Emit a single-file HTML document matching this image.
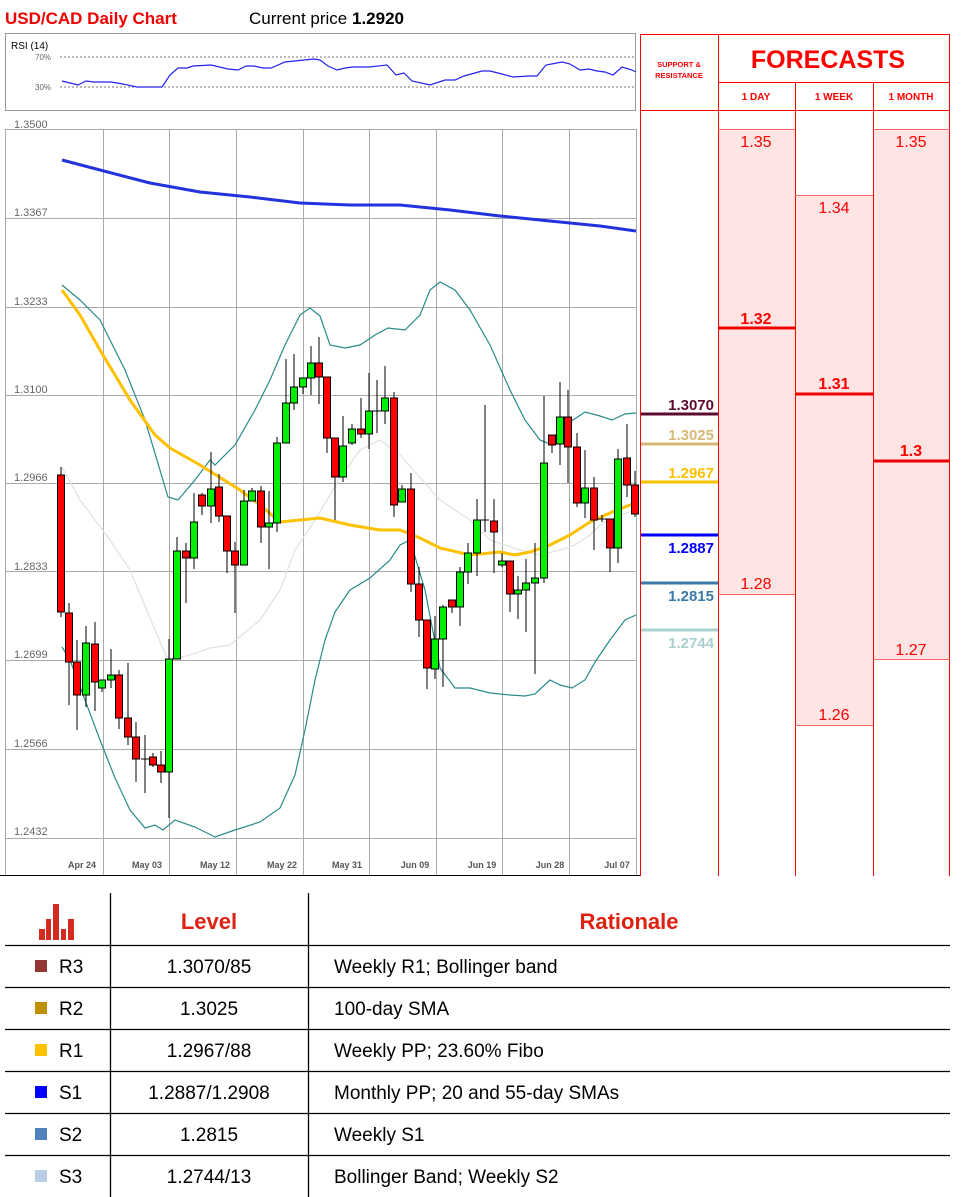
<!DOCTYPE html>
<html><head><meta charset="utf-8"><style>
html,body{margin:0;padding:0;background:#fff;width:966px;height:1197px;overflow:hidden}
svg{display:block}
text{font-family:"Liberation Sans",sans-serif}
</style></head><body>
<svg width="966" height="1197" viewBox="0 0 966 1197" xmlns="http://www.w3.org/2000/svg">
<rect width="966" height="1197" fill="#fff"/>
<!-- title -->
<text x="5" y="24" font-size="17" font-weight="bold" fill="#f00000">USD/CAD Daily Chart</text>
<text x="249" y="24" font-size="17" fill="#000">Current price <tspan font-weight="bold">1.2920</tspan></text>
<!-- RSI -->
<rect x="5.5" y="33.5" width="630" height="77" fill="#fff" stroke="#999"/>
<text x="11" y="49" font-size="10" fill="#000">RSI (14)</text>
<text x="35" y="60" font-size="8" fill="#666">70%</text>
<text x="35" y="90" font-size="8" fill="#666">30%</text>
<line x1="60" y1="57" x2="636" y2="57" stroke="#777" stroke-dasharray="2,2"/>
<line x1="60" y1="87" x2="636" y2="87" stroke="#777" stroke-dasharray="2,2"/>
<polyline fill="none" stroke="#2222ee" stroke-width="1.2" points="62,81 78,85 86,81 94,82 111,82 123,84 137,87 162,87 170,75 178,68 187,68 193,66 211,65 228,69 238,70 246,66 254,66 263,68 271,68 285,62 304,60 314,59 320,60 328,66 337,70 345,68 353,67 369,67 387,65 396,75 404,73 412,81 430,85 445,80 455,80 464,76 482,71 490,71 498,73 513,77 529,76 537,76 546,65 562,62 570,64 580,70 589,69 597,71 605,72 613,75 622,67 632,70 636,72"/>
<!-- y labels -->
<g font-size="11" fill="#666">
<text x="14" y="128">1.3500</text><text x="14" y="216">1.3367</text><text x="14" y="305">1.3233</text><text x="14" y="393">1.3100</text><text x="14" y="481">1.2966</text><text x="14" y="570">1.2833</text><text x="14" y="658">1.2699</text><text x="14" y="747">1.2566</text><text x="14" y="835">1.2432</text>
</g>
<!-- grid -->
<g stroke="#aaa" stroke-width="1">
<line x1="5" y1="129.5" x2="636" y2="129.5"/><line x1="5" y1="218.5" x2="636" y2="218.5"/><line x1="5" y1="307.5" x2="636" y2="307.5"/><line x1="5" y1="395.5" x2="636" y2="395.5"/><line x1="5" y1="483.5" x2="636" y2="483.5"/><line x1="5" y1="571.5" x2="636" y2="571.5"/><line x1="5" y1="660.5" x2="636" y2="660.5"/><line x1="5" y1="749.5" x2="636" y2="749.5"/><line x1="5" y1="838.5" x2="636" y2="838.5"/>
<line x1="103.5" y1="129" x2="103.5" y2="875"/><line x1="169.5" y1="129" x2="169.5" y2="875"/><line x1="236.5" y1="129" x2="236.5" y2="875"/><line x1="303.5" y1="129" x2="303.5" y2="875"/><line x1="369.5" y1="129" x2="369.5" y2="875"/><line x1="436.5" y1="129" x2="436.5" y2="875"/><line x1="502.5" y1="129" x2="502.5" y2="875"/><line x1="569.5" y1="129" x2="569.5" y2="875"/><line x1="636.5" y1="129" x2="636.5" y2="875"/>
<line x1="5.5" y1="129" x2="5.5" y2="875"/>
</g>
<line x1="0" y1="875.5" x2="640" y2="875.5" stroke="#000"/>
<g font-size="9" font-weight="bold" fill="#555" text-anchor="middle">
<text x="82" y="868">Apr 24</text><text x="147" y="868">May 03</text><text x="215" y="868">May 12</text><text x="282" y="868">May 22</text><text x="347" y="868">May 31</text><text x="415" y="868">Jun 09</text><text x="482" y="868">Jun 19</text><text x="550" y="868">Jun 28</text><text x="617" y="868">Jul 07</text>
</g>
<!-- 200 SMA -->
<polyline fill="none" stroke="#2233dd" stroke-width="3" points="62,160 100,170 150,183 200,192 250,197 300,203 350,205 400,205 450,210 500,216 550,221 600,226 636,231"/>
<!-- middle BB -->
<polyline fill="none" stroke="#e2e2e2" stroke-width="1.3" points="62,467 80,500 110,540 130,570 155,630 168,660 190,655 210,648 230,645 260,620 280,590 295,550 315,520 340,478 360,450 380,440 400,455 440,500 470,520 490,540 520,550 540,555 560,550 575,545 590,535 600,525 620,515 636,510"/>
<!-- upper/lower BB -->
<polyline fill="none" stroke="#2a8a8a" stroke-width="1.2" points="62,285 80,300 100,320 125,370 145,420 168,497 178,500 195,480 210,460 215,465 235,445 255,410 270,380 285,345 300,315 310,308 320,316 330,345 345,348 360,345 375,335 388,328 405,330 420,315 430,290 440,282 455,290 470,310 490,345 510,390 525,420 540,440 550,444 570,422 585,412 600,416 612,420 625,414 636,413"/>
<polyline fill="none" stroke="#2a8a8a" stroke-width="1.2" points="62,647 70,660 85,700 100,740 115,778 130,810 145,828 155,825 163,830 175,820 195,827 215,837 235,830 260,822 280,808 295,775 305,730 315,680 325,640 335,612 350,590 370,578 390,560 400,545 410,540 425,590 440,668 455,688 470,688 490,693 510,695 525,696 535,694 550,680 560,685 572,688 585,680 595,662 610,640 625,620 636,615"/>
<!-- yellow SMA -->
<polyline fill="none" stroke="#ffc000" stroke-width="3" points="62,290 80,315 100,350 130,400 155,435 170,448 200,465 240,490 260,505 280,522 300,520 320,518 350,525 380,530 400,530 420,538 440,548 470,555 500,552 515,555 530,552 550,545 570,535 590,522 610,513 630,505 636,503"/>
<!-- candles -->
<g stroke="#000" stroke-width="1">
<line x1="61" y1="467" x2="61" y2="617"/><rect x="57.5" y="475" width="7" height="137" fill="#f00"/>
<line x1="69" y1="603" x2="69" y2="705"/><rect x="65.5" y="613" width="7" height="49" fill="#f00"/>
<line x1="77" y1="640" x2="77" y2="730"/><rect x="73.5" y="662" width="7" height="33" fill="#f00"/>
<line x1="86" y1="626" x2="86" y2="707"/><rect x="82.5" y="643" width="7" height="52" fill="#0e0"/>
<line x1="95" y1="622" x2="95" y2="711"/><rect x="91.5" y="644" width="7" height="38" fill="#f00"/>
<line x1="102" y1="680" x2="102" y2="692"/><rect x="98.5" y="680" width="7" height="8" fill="#0e0"/>
<line x1="111" y1="649" x2="111" y2="688"/><rect x="107.5" y="675" width="7" height="5" fill="#0e0"/>
<line x1="119" y1="670" x2="119" y2="729"/><rect x="115.5" y="675" width="7" height="43" fill="#f00"/>
<line x1="128" y1="663" x2="128" y2="745"/><rect x="124.5" y="718" width="7" height="19" fill="#f00"/>
<line x1="136" y1="722" x2="136" y2="782"/><rect x="132.5" y="737" width="7" height="22" fill="#f00"/>
<line x1="145" y1="735" x2="145" y2="793"/><line x1="141" y1="759" x2="149" y2="759"/>
<line x1="153" y1="753" x2="153" y2="767"/><rect x="149.5" y="757" width="7" height="8" fill="#f00"/>
<line x1="161" y1="751" x2="161" y2="783"/><rect x="157.5" y="765" width="7" height="7" fill="#f00"/>
<line x1="169" y1="639" x2="169" y2="818"/><rect x="165.5" y="659" width="7" height="113" fill="#0e0"/>
<line x1="177" y1="537" x2="177" y2="659"/><rect x="173.5" y="551" width="7" height="108" fill="#0e0"/>
<line x1="186" y1="543" x2="186" y2="603"/><rect x="182.5" y="551" width="7" height="7" fill="#f00"/>
<line x1="194" y1="493" x2="194" y2="569"/><rect x="190.5" y="522" width="7" height="36" fill="#0e0"/>
<line x1="202" y1="493" x2="202" y2="515"/><rect x="198.5" y="495" width="7" height="11" fill="#f00"/>
<line x1="211" y1="452" x2="211" y2="523"/><rect x="207.5" y="489" width="7" height="17" fill="#0e0"/>
<line x1="219" y1="474" x2="219" y2="522"/><rect x="215.5" y="487" width="7" height="29" fill="#f00"/>
<line x1="227" y1="516" x2="227" y2="573"/><rect x="223.5" y="516" width="7" height="35" fill="#f00"/>
<line x1="235" y1="542" x2="235" y2="613"/><rect x="231.5" y="551" width="7" height="14" fill="#f00"/>
<line x1="244" y1="490" x2="244" y2="565"/><rect x="240.5" y="501" width="7" height="64" fill="#0e0"/>
<line x1="252" y1="488" x2="252" y2="501"/><rect x="248.5" y="491" width="7" height="10" fill="#0e0"/>
<line x1="261" y1="486" x2="261" y2="543"/><rect x="257.5" y="491" width="7" height="36" fill="#f00"/>
<line x1="269" y1="491" x2="269" y2="569"/><rect x="265.5" y="523" width="7" height="4" fill="#0e0"/>
<line x1="277" y1="437" x2="277" y2="532"/><rect x="273.5" y="443" width="7" height="80" fill="#0e0"/>
<line x1="286" y1="359" x2="286" y2="443"/><rect x="282.5" y="403" width="7" height="40" fill="#0e0"/>
<line x1="294" y1="354" x2="294" y2="410"/><rect x="290.5" y="387" width="7" height="16" fill="#0e0"/>
<line x1="303" y1="378" x2="303" y2="394"/><rect x="299.5" y="378" width="7" height="9" fill="#0e0"/>
<line x1="311" y1="346" x2="311" y2="395"/><rect x="307.5" y="363" width="7" height="15" fill="#0e0"/>
<line x1="319" y1="337" x2="319" y2="404"/><rect x="315.5" y="363" width="7" height="14" fill="#f00"/>
<line x1="327" y1="377" x2="327" y2="453"/><rect x="323.5" y="377" width="7" height="61" fill="#f00"/>
<line x1="335" y1="438" x2="335" y2="520"/><rect x="331.5" y="438" width="7" height="39" fill="#f00"/>
<line x1="343" y1="416" x2="343" y2="482"/><rect x="339.5" y="446" width="7" height="31" fill="#0e0"/>
<line x1="352" y1="424" x2="352" y2="445"/><rect x="348.5" y="429" width="7" height="14" fill="#0e0"/>
<line x1="361" y1="398" x2="361" y2="438"/><rect x="357.5" y="429" width="7" height="5" fill="#f00"/>
<line x1="369" y1="373" x2="369" y2="449"/><rect x="365.5" y="411" width="7" height="23" fill="#0e0"/>
<line x1="377" y1="380" x2="377" y2="433"/><line x1="373" y1="411" x2="381" y2="411"/>
<line x1="385" y1="366" x2="385" y2="424"/><rect x="381.5" y="398" width="7" height="13" fill="#0e0"/>
<line x1="394" y1="392" x2="394" y2="517"/><rect x="390.5" y="398" width="7" height="107" fill="#f00"/>
<line x1="402" y1="485" x2="402" y2="502"/><rect x="398.5" y="489" width="7" height="13" fill="#0e0"/>
<line x1="411" y1="473" x2="411" y2="592"/><rect x="407.5" y="489" width="7" height="95" fill="#f00"/>
<line x1="419" y1="567" x2="419" y2="637"/><rect x="415.5" y="584" width="7" height="36" fill="#f00"/>
<line x1="427" y1="620" x2="427" y2="689"/><rect x="423.5" y="620" width="7" height="48" fill="#f00"/>
<line x1="435" y1="616" x2="435" y2="679"/><rect x="431.5" y="639" width="7" height="30" fill="#0e0"/>
<line x1="443" y1="605" x2="443" y2="687"/><rect x="439.5" y="607" width="7" height="32" fill="#0e0"/>
<line x1="452" y1="600" x2="452" y2="613"/><rect x="448.5" y="600" width="7" height="7" fill="#f00"/>
<line x1="460" y1="567" x2="460" y2="626"/><rect x="456.5" y="572" width="7" height="35" fill="#0e0"/>
<line x1="468" y1="543" x2="468" y2="584"/><rect x="464.5" y="553" width="7" height="19" fill="#0e0"/>
<line x1="477" y1="499" x2="477" y2="576"/><rect x="473.5" y="520" width="7" height="33" fill="#0e0"/>
<line x1="485" y1="405" x2="485" y2="532"/><line x1="481" y1="520" x2="489" y2="520"/>
<line x1="494" y1="499" x2="494" y2="573"/><rect x="490.5" y="521" width="7" height="11" fill="#f00"/>
<line x1="502" y1="553" x2="502" y2="567"/><rect x="498.5" y="561" width="7" height="4" fill="#0e0"/>
<line x1="510" y1="561" x2="510" y2="612"/><rect x="506.5" y="561" width="7" height="33" fill="#f00"/>
<line x1="518" y1="576" x2="518" y2="619"/><rect x="514.5" y="590" width="7" height="4" fill="#0e0"/>
<line x1="526" y1="559" x2="526" y2="632"/><rect x="522.5" y="583" width="7" height="7" fill="#0e0"/>
<line x1="535" y1="543" x2="535" y2="674"/><rect x="531.5" y="578" width="7" height="5" fill="#0e0"/>
<line x1="544" y1="396" x2="544" y2="583"/><rect x="540.5" y="463" width="7" height="115" fill="#0e0"/>
<line x1="552" y1="435" x2="552" y2="453"/><rect x="548.5" y="435" width="7" height="10" fill="#f00"/>
<line x1="560" y1="382" x2="560" y2="465"/><rect x="556.5" y="417" width="7" height="27" fill="#0e0"/>
<line x1="568" y1="390" x2="568" y2="483"/><rect x="564.5" y="417" width="7" height="30" fill="#f00"/>
<line x1="577" y1="433" x2="577" y2="507"/><rect x="573.5" y="447" width="7" height="56" fill="#f00"/>
<line x1="585" y1="450" x2="585" y2="518"/><rect x="581.5" y="488" width="7" height="15" fill="#0e0"/>
<line x1="594" y1="477" x2="594" y2="550"/><rect x="590.5" y="488" width="7" height="32" fill="#f00"/>
<line x1="602" y1="515" x2="602" y2="522"/><line x1="598" y1="519" x2="606" y2="519"/>
<line x1="610" y1="519" x2="610" y2="572"/><rect x="606.5" y="519" width="7" height="29" fill="#f00"/>
<line x1="618" y1="449" x2="618" y2="563"/><rect x="614.5" y="459" width="7" height="89" fill="#0e0"/>
<line x1="627" y1="424" x2="627" y2="497"/><rect x="623.5" y="458" width="7" height="27" fill="#f00"/>
<line x1="635" y1="471" x2="635" y2="517"/><rect x="631.5" y="485" width="7" height="29" fill="#f00"/>
</g>
<!-- right panel -->
<rect x="718" y="129" width="77" height="465" fill="#ffe4e4"/>
<rect x="795" y="195" width="78" height="530" fill="#ffe4e4"/>
<rect x="873" y="129" width="77" height="530" fill="#ffe4e4"/>
<g stroke="#f00" stroke-width="1">
<line x1="640.5" y1="34" x2="640.5" y2="876"/><line x1="718.5" y1="34" x2="718.5" y2="876"/><line x1="795.5" y1="82" x2="795.5" y2="876"/><line x1="873.5" y1="82" x2="873.5" y2="876"/><line x1="949.5" y1="34" x2="949.5" y2="876"/>
<line x1="640" y1="34.5" x2="950" y2="34.5"/><line x1="718" y1="82.5" x2="950" y2="82.5"/><line x1="640" y1="110.5" x2="950" y2="110.5"/>
<line x1="718" y1="129.5" x2="795" y2="129.5" stroke="#f66"/><line x1="873" y1="129.5" x2="950" y2="129.5" stroke="#f66"/><line x1="795" y1="195.5" x2="873" y2="195.5" stroke="#f66"/>
<line x1="718" y1="594.5" x2="795" y2="594.5" stroke="#f66"/><line x1="795" y1="725.5" x2="873" y2="725.5" stroke="#f66"/><line x1="873" y1="659.5" x2="950" y2="659.5" stroke="#f66"/>
</g>
<g stroke="#e00" stroke-width="3">
<line x1="718" y1="328" x2="795" y2="328"/><line x1="795" y1="394" x2="873" y2="394"/><line x1="873" y1="461" x2="950" y2="461"/>
</g>
<text x="679" y="67" font-size="7.5" font-weight="bold" fill="#f00" text-anchor="middle">SUPPORT &amp;</text>
<text x="679" y="78" font-size="7.5" font-weight="bold" fill="#f00" text-anchor="middle">RESISTANCE</text>
<text x="828" y="68" font-size="25" font-weight="bold" fill="#f00" text-anchor="middle">FORECASTS</text>
<g font-size="10" font-weight="bold" fill="#f00" text-anchor="middle">
<text x="756" y="100">1 DAY</text><text x="834" y="100">1 WEEK</text><text x="911" y="100">1 MONTH</text>
</g>
<g font-size="16" fill="#f00" text-anchor="middle">
<text x="756" y="147">1.35</text><text x="756" y="324" font-weight="bold">1.32</text><text x="756" y="589">1.28</text>
<text x="834" y="213">1.34</text><text x="834" y="389" font-weight="bold">1.31</text><text x="834" y="720">1.26</text>
<text x="911" y="147">1.35</text><text x="911" y="456" font-weight="bold">1.3</text><text x="911" y="655">1.27</text>
</g>
<!-- S&R lines -->
<g stroke-width="3">
<line x1="641" y1="414" x2="718" y2="414" stroke="#5c0a30"/>
<line x1="641" y1="444" x2="718" y2="444" stroke="#d8b878"/>
<line x1="641" y1="482" x2="718" y2="482" stroke="#ffc000"/>
<line x1="641" y1="535" x2="718" y2="535" stroke="#0000ff"/>
<line x1="641" y1="583" x2="718" y2="583" stroke="#3a7aa8"/>
<line x1="641" y1="630" x2="718" y2="630" stroke="#a8d0d0"/>
</g>
<g font-size="15" font-weight="bold" text-anchor="end">
<text x="714" y="410" fill="#5c0a30">1.3070</text>
<text x="714" y="440" fill="#d8b878">1.3025</text>
<text x="714" y="478" fill="#ffc000">1.2967</text>
<text x="714" y="553" fill="#0000ff">1.2887</text>
<text x="714" y="601" fill="#3a7aa8">1.2815</text>
<text x="714" y="648" fill="#a8d0d0">1.2744</text>
</g>
<!-- table -->
<g stroke="#000" stroke-width="1.3">
<line x1="110.5" y1="893" x2="110.5" y2="1197"/><line x1="308.5" y1="893" x2="308.5" y2="1197"/>
<line x1="5" y1="945.5" x2="950" y2="945.5"/><line x1="5" y1="987.5" x2="950" y2="987.5"/><line x1="5" y1="1029.5" x2="950" y2="1029.5"/><line x1="5" y1="1071.5" x2="950" y2="1071.5"/><line x1="5" y1="1113.5" x2="950" y2="1113.5"/><line x1="5" y1="1155.5" x2="950" y2="1155.5"/>
</g>
<g fill="#d42a20">
<rect x="39" y="929" width="6" height="11"/><rect x="46" y="919" width="5" height="21"/><rect x="53" y="904" width="6" height="36"/><rect x="61" y="929" width="5" height="11"/><rect x="68" y="919" width="6" height="21"/>
</g>
<text x="209" y="929" font-size="22" font-weight="bold" fill="#e02010" text-anchor="middle">Level</text>
<text x="629" y="929" font-size="22" font-weight="bold" fill="#e02010" text-anchor="middle">Rationale</text>
<g>
<rect x="35" y="960" width="12" height="12" fill="#943634"/>
<rect x="35" y="1002" width="12" height="12" fill="#c09000"/>
<rect x="35" y="1044" width="12" height="12" fill="#ffc000"/>
<rect x="35" y="1086" width="12" height="12" fill="#0000ff"/>
<rect x="35" y="1128" width="12" height="12" fill="#4f81bd"/>
<rect x="35" y="1170" width="12" height="12" fill="#b8cce4"/>
</g>
<g font-size="19" fill="#000">
<text x="59" y="973">R3</text><text x="59" y="1015">R2</text><text x="59" y="1057">R1</text><text x="59" y="1099">S1</text><text x="59" y="1141">S2</text><text x="59" y="1183">S3</text>
<g text-anchor="middle">
<text x="209" y="973">1.3070/85</text><text x="209" y="1015">1.3025</text><text x="209" y="1057">1.2967/88</text><text x="209" y="1099">1.2887/1.2908</text><text x="209" y="1141">1.2815</text><text x="209" y="1183">1.2744/13</text>
</g>
<text x="334" y="973">Weekly R1; Bollinger band</text>
<text x="334" y="1015">100-day SMA</text>
<text x="334" y="1057">Weekly PP; 23.60% Fibo</text>
<text x="334" y="1099">Monthly PP; 20 and 55-day SMAs</text>
<text x="334" y="1141">Weekly S1</text>
<text x="334" y="1183">Bollinger Band; Weekly S2</text>
</g>
</svg>
</body></html>
